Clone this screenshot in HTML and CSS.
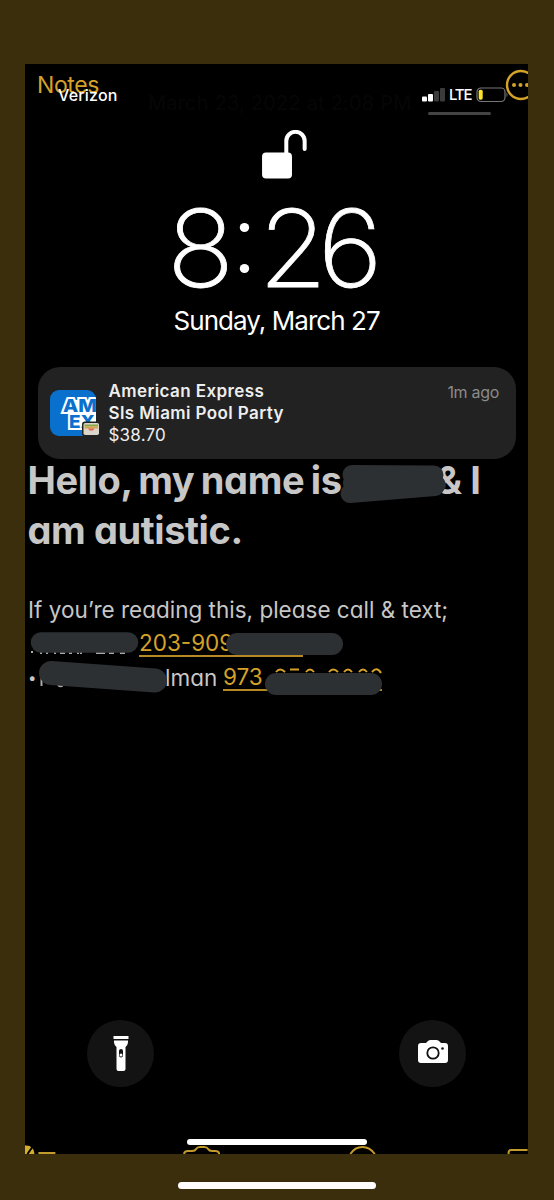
FILE: index.html
```html
<!DOCTYPE html>
<html lang="en">
  <head>
    <meta charset="UTF-8" />
    <meta name="viewport" content="width=device-width, initial-scale=1.0" />
    <title>Lock screen</title>
    <link rel="stylesheet" href="styles.css">
  </head>
  <body>
    <div class="screen">
      <div class="notes-bar">
        <span class="notes-back">Notes</span>
        <span class="notes-date">March 23, 2022 at 2:08 PM</span>
        <svg class="more" width="34" height="34" viewBox="0 0 34 34">
          <circle cx="17" cy="17" r="14" fill="none" stroke="#d5a229" stroke-width="2.4" />
          <circle cx="10" cy="17" r="2" fill="#d5a229" />
          <circle cx="16.5" cy="17" r="2" fill="#d5a229" />
          <circle cx="23" cy="17" r="2" fill="#d5a229" />
        </svg>
      </div>
      <header class="status">
        <span class="carrier">Verizon</span>
        <svg class="signal" width="24" height="16" viewBox="0 0 24 16">
          <rect x="0" y="9.5" width="5" height="5" rx="1" fill="#fff" />
          <rect x="6" y="7" width="5" height="7.5" rx="1" fill="#fff" />
          <rect x="12" y="4" width="5" height="10.5" rx="1" fill="#3b3b3b" />
          <rect x="18" y="1" width="5" height="13.5" rx="1" fill="#3b3b3b" />
        </svg>
        <span class="network">LTE</span>
        <svg class="battery" width="33" height="16" viewBox="0 0 33 16">
          <rect x="1" y="1" width="28" height="13.5" rx="4" fill="none" stroke="#77777a" stroke-width="1.2" />
          <rect x="2.7" y="2.7" width="4" height="10" rx="1.6" fill="#fbe32d" />
          <path d="M30.5 5.5q2 2.2 0 4.6z" fill="#77777a" />
        </svg>
      </header>
      <div class="grabber"></div>

      <svg class="lock" width="46" height="50" viewBox="0 0 46 50">
        <rect x="0" y="22.5" width="30" height="26" rx="4" fill="#fff" />
        <path d="M24.3 25V11a9.2 9.2 0 0 1 18.4 0v8" fill="none" stroke="#fff" stroke-width="4" stroke-linecap="round" />
      </svg>
      <div class="time"><span class="hour">8</span><span class="colon"></span><span class="tens">2</span><span>6</span></div>
      <div class="date">Sunday, March 27</div>

      <section class="notification">
        <div class="app-icon">
          <svg width="50" height="50" viewBox="0 0 50 50">
            <clipPath id="tile"><rect width="46" height="46" rx="9" /></clipPath>
            <g clip-path="url(#tile)">
              <rect width="46" height="46" fill="#0970ce" />
              <path d="M19 10h27v28H20V24h-5z" fill="#fff" />
              <text class="amex" x="13" y="22" textLength="34" lengthAdjust="spacingAndGlyphs">AM</text>
              <text class="amex" x="19" y="37.5" textLength="26" lengthAdjust="spacingAndGlyphs">EX</text>
            </g>
            <rect x="32" y="31.5" width="18" height="15" rx="3" fill="#222" />
            <rect x="33.5" y="33" width="15.5" height="12" rx="1.8" fill="#dcd5ca" />
            <path d="M34.5 34.5h13.5v2h-13.5z" fill="#87a84d" />
            <path d="M34.5 36.5h13.5v2h-13.5z" fill="#d9a54a" />
            <path d="M38 38.5h6.5l-1.5 2h-3.5z" fill="#e1664f" />
          </svg>
        </div>
        <div class="message">
          <p class="app-name">American Express</p>
          <p class="merchant">Sls Miami Pool Party</p>
          <p class="amount">$38.70</p>
        </div>
        <span class="ago">1m ago</span>
      </section>

      <article class="note">
        <h1 class="first-line"><span class="intro">Hello, my name is</span><span class="amp">&amp; I</span></h1>
        <h1 class="second">am autistic.</h1>
        <p class="please">If you’re reading this, please call &amp; text;</p>
        <p class="contact first"><a class="phone phone-one">203-909</a></p>
        <p class="contact"><span class="bullet">•</span><span class="name-end">lman</span><a class="phone phone-two">973</a></p>
        <!-- marker strokes over the private details -->
        <svg class="marker" width="503" height="250" viewBox="0 0 503 250">
          <g fill="none" stroke="#aaa" stroke-width="2">
            <path d="M6 193h2M15 194h2M21 194h2M29 194h2M35 194h5M44 194h3M52 194h2M55 194h2M71 194h9M84 194h5M95 194h5" />
            <path d="M16.5 209v18M33 226q2.5 2.5 5 0" />
          </g>
          <g fill="none" stroke="#d5a229" stroke-width="2">
            <path d="M251 213q4-5 9 0M265 210.500h9M281 213q4-5 8 0M304 213q4-5 9 0M319 213q4-5 8 0M334 213q4-5 8 0M347 213q5-6 9 1" />
          </g>
          <g fill="none" stroke="#2c3033" stroke-linecap="round">
            <path d="M327 15.5L409 16M325 34.5L410 27.5" stroke-width="19" />
            <path d="M329 24H405" stroke-width="22" />
            <path d="M409 20L413 26" stroke-width="16" />
            <path d="M16 183.5H103" stroke-width="20.5" />
            <path d="M212 185H307" stroke-width="22" />
            <path d="M26 214L130 221.5" stroke-width="24" />
            <path d="M251 225H346" stroke-width="22" />
          </g>
        </svg>
      </article>

      <footer class="shortcuts">
        <div class="round">
          <svg width="20" height="38" viewBox="0 0 20 38">
            <path d="M2.5 1h15v3h-15zM3 5.5h14v2q0 2-2.500 4.500v22q0 2-2 2h-5q-2 0-2-2V12Q3 9.500 3 7.500z" fill="#fff" />
            <rect x="8" y="14" width="4" height="8.5" rx="2" fill="#111" />
            <circle cx="10" cy="20" r="1.5" fill="#fff" />
          </svg>
        </div>
        <div class="round">
          <svg class="camera" width="34" height="28" viewBox="0 0 34 28">
            <path d="M5 4h5l2-2q1-1 3-1h5q2 0 3 1l2 2h4q3 0 3 3v14q0 3-3 3H5q-3 0-3-3V7q0-3 3-3z" fill="#fff" />
            <circle cx="17" cy="14" r="5.7" fill="none" stroke="#111" stroke-width="1.8" />
            <circle cx="26.5" cy="9.5" r="1.3" fill="#111" />
          </svg>
        </div>
      </footer>
      <div class="home-bar"></div>
      <svg class="toolbar" width="503" height="9" viewBox="0 0 503 9">
        <g fill="none" stroke="#c39a2c" stroke-width="2">
          <circle cx="1" cy="8.5" r="8" fill="#d5ae2c" stroke="none" />
          <path d="M2 9L7 2" stroke="#000" />
          <path d="M13 8h17M159 9q0-3 4-3h4q3 0 4-2 1-2 4-2h4q3 0 4 2 1 2 4 2h3q4 0 4 3M325.5 9Q330 2 337.5 2T350 9M484 9V7q0-2 3-2h16" />
        </g>
      </svg>
    </div>
    <div class="home-bar outer"></div>
  </body>
</html>
```
FILE: styles.css
```css
* {
  margin: 0;
  padding: 0;
  box-sizing: border-box;
}
body {
  height: 1200px;
  overflow: hidden;
  background-color: #3b2e0d;
  font-family: Inter, sans-serif;
  color: #fff;
}
svg {
  display: block;
}
.screen {
  position: relative;
  width: 503px;
  height: 1090px;
  margin: 64px 0 0 25px;
  overflow: hidden;
  background-color: #000;
  display: flex;
  flex-direction: column;
}
/* the note app showing through behind the lock screen */
.notes-bar {
  position: absolute;
  top: 0;
  left: 0;
  width: 100%;
}
.notes-back {
  position: absolute;
  left: 12px;
  top: 7px;
  font-size: 23px;
  line-height: 28px;
  letter-spacing: -0.4px;
  color: #d5a229;
}
.notes-date {
  position: absolute;
  left: 123px;
  top: 27px;
  font-size: 20px;
  line-height: 24px;
  letter-spacing: 0.2px;
  white-space: nowrap;
  color: #060606;
}
.more {
  position: absolute;
  left: 479px;
  top: 4px;
}
.status {
  position: relative;
  display: flex;
  align-items: center;
  height: 24px;
  margin: 19px 0 0 33px;
}
.carrier {
  width: 364px;
  font-size: 16px;
  font-weight: 500;
  letter-spacing: 0.2px;
}
.network {
  margin-left: 3px;
  width: 27px;
  font-size: 15px;
  font-weight: 500;
  letter-spacing: -1.2px;
}
.grabber {
  width: 63px;
  height: 3px;
  margin: 5px 0 0 403px;
  border-radius: 2px;
  background-color: #444;
}
.lock {
  margin: 15px 0 0 237px;
}
.time {
  display: flex;
  align-items: center;
  width: 240px;
  height: 120px;
  margin: 8px 0 0 142px;
  font-size: 107px;
  font-weight: 200;
  line-height: 120px;
  transform: scaleX(1.04);
  transform-origin: left;
  -webkit-text-stroke: 0.8px #fff;
}
.hour {
  width: 60px;
}
.tens {
  width: 57px;
}
.colon {
  display: flex;
  flex-direction: column;
  justify-content: space-between;
  height: 50px;
  width: 28px;
}
.colon::before,
.colon::after {
  content: "";
  width: 9px;
  height: 9px;
  margin-left: 9.5px;
  border-radius: 50%;
  background-color: #fff;
}
.date {
  height: 34px;
  margin: -4px 0 0 148.5px;
  font-size: 26px;
  line-height: 34px;
  letter-spacing: -0.95px;
  white-space: nowrap;
}
.notification {
  display: flex;
  width: 478px;
  height: 92px;
  margin: 29px 0 0 13px;
  padding: 13px 17px 0 12px;
  border-radius: 22px;
  background-color: #222;
}
.app-icon {
  width: 50px;
  margin-top: 10px;
}
.amex {
  font-size: 18px;
  font-weight: 800;
  fill: #0970ce;
  stroke: #fff;
  stroke-width: 4px;
  paint-order: stroke;
}
.message {
  flex: 1;
  margin-left: 8.5px;
  font-size: 17px;
  line-height: 22px;
  color: #eee;
}
.app-name,
.merchant {
  font-weight: 600;
  letter-spacing: 0.4px;
}
.amount {
  letter-spacing: 0.2px;
}
.ago {
  font-size: 16px;
  line-height: 24px;
  letter-spacing: -0.3px;
  color: #8b8b8b;
}
.note {
  position: relative;
  height: 250px;
  color: #c7c7c7;
  font-feature-settings: "cv11";
}
.note h1 {
  display: flex;
  height: 50px;
  margin-left: 2.5px;
  font-size: 38px;
  line-height: 50px;
  letter-spacing: -0.4px;
  white-space: nowrap;
}
.note .first-line {
  height: 46px;
  line-height: 42px;
}
.intro {
  width: 409px;
  word-spacing: -2px;
}
.note .second {
  margin-bottom: 38px;
}
.please,
.contact {
  height: 34px;
  padding-left: 3px;
  font-size: 22.5px;
  line-height: 34px;
  white-space: nowrap;
}
.contact {
  display: flex;
  align-items: center;
}
.contact.first {
  padding-left: 114px;
}
.phone {
  height: 27px;
  line-height: 26px;
  border-bottom: 2px solid #b58a26;
  color: #d5a229;
}
.phone-one {
  width: 164px;
}
.phone-two {
  width: 159px;
}
.bullet {
  width: 137px;
  font-size: 15px;
}
.name-end {
  width: 58px;
}
.marker {
  position: absolute;
  top: 0;
  left: 0;
}
.shortcuts {
  display: flex;
  justify-content: space-between;
  margin: 312px 62px 0;
}
.round {
  display: flex;
  align-items: center;
  justify-content: center;
  width: 67px;
  height: 67px;
  border-radius: 50%;
  background-color: #131313;
}
.camera {
  margin-bottom: 2px;
}
.home-bar {
  width: 180px;
  height: 6px;
  margin: 52px 0 0 162px;
  border-radius: 3px;
  background-color: #fff;
}
.home-bar.outer {
  width: 198px;
  height: 7px;
  margin: 28px 0 0 178px;
  border-radius: 4px;
}
.toolbar {
  margin-top: auto;
}
```
